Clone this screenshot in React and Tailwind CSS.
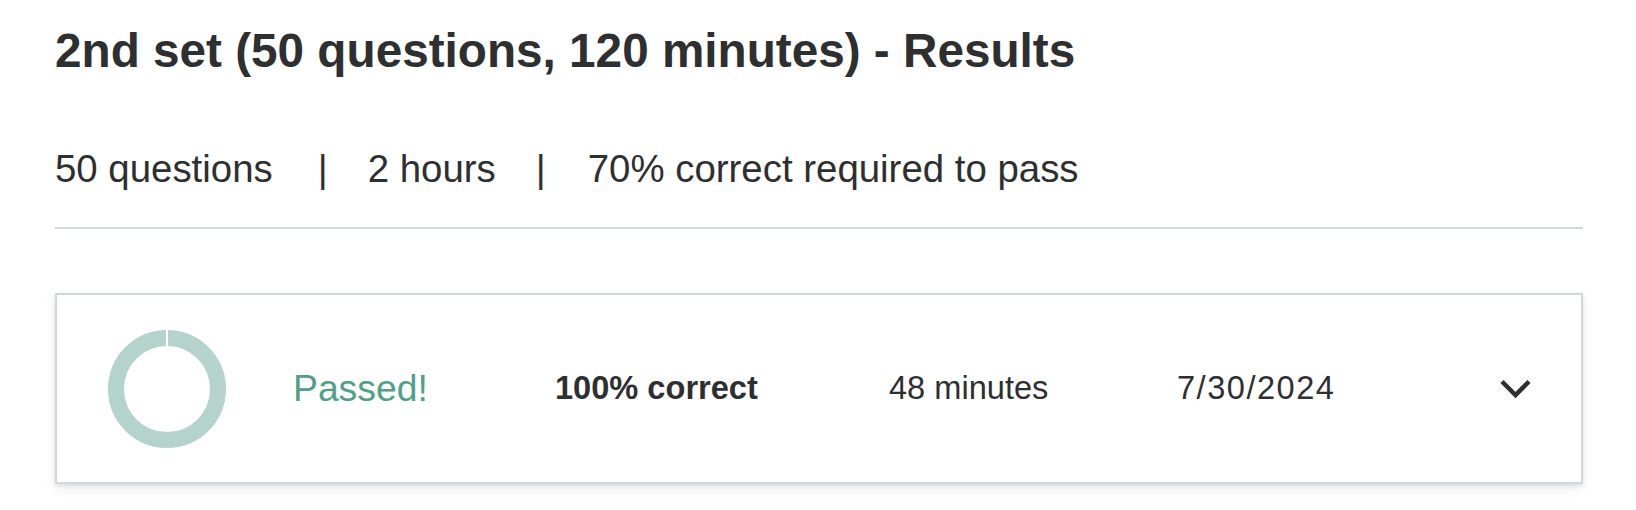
export default function App() {
  return (
    <div className="min-h-[510px] bg-white pl-[55px] pr-[53px] pt-[22px] text-[#2d2f31] font-['Liberation_Sans',Arial,sans-serif]">
      <h1 className="text-[47.7px] font-bold leading-[58px]">2nd set (50 questions, 120 minutes) - Results</h1>

      <div className="mt-[66px] flex items-center text-[38.4px] leading-[46px]">
        <span>50 questions</span>
        <span className="ml-[45px] mr-[40px]">|</span>
        <span>2 hours</span>
        <span className="ml-[40px] mr-[42px]">|</span>
        <span>70% correct required to pass</span>
      </div>

      <div className="mt-[35px] h-[2px] bg-[#d1d7dc]" />

      <div className="mt-[64px] flex h-[191px] items-center border-2 border-[#d1d7dc] bg-white pl-[51px] pr-[50px] shadow-[0_2px_4px_rgba(0,0,0,0.08),0_4px_12px_rgba(0,0,0,0.08)]">
        <svg width="118" height="118" viewBox="0 0 118 118" className="shrink-0">
          <circle cx="59" cy="59" r="51" fill="none" stroke="#b4d3cd" strokeWidth="16" />
          <line x1="59" y1="0" x2="59" y2="17" stroke="#ffffff" strokeWidth="2" />
        </svg>
        <div className="ml-[67px] w-[262px] text-[37.3px] text-[#4fa088]">Passed!</div>
        <div className="w-[334px] text-[32.6px] font-bold">100% correct</div>
        <div className="w-[288px] text-[32.6px]">48 minutes</div>
        <div className="text-[32.6px] tracking-[1.5px]">7/30/2024</div>
        <svg width="31" height="20" viewBox="0 0 31 20" className="ml-auto shrink-0">
          <polyline points="2,2.5 15.5,16 29,2.5" fill="none" stroke="#2d2f31" strokeWidth="4.5" />
        </svg>
      </div>
    </div>
  );
}
